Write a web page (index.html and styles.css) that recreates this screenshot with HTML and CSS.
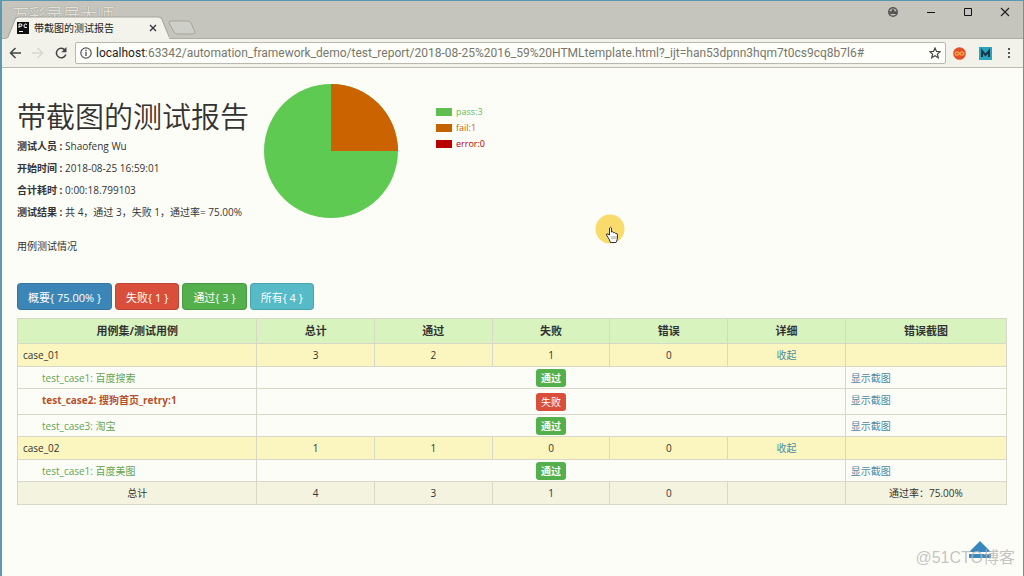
FILE: index.html
```html
<!DOCTYPE html>
<html lang="zh-CN">
<head>
<meta charset="utf-8">
<meta name="viewport" content="width=device-width, initial-scale=1">
<title>带截图的测试报告</title>
<link rel="stylesheet" href="styles.css">
</head>
<body>
<div class="window">
  <header class="tabstrip">
    <span class="recorder-mark">万彩录屏大师</span>
    <div class="tab">
      <svg class="tab-shape" viewBox="0 0 160 23" preserveAspectRatio="none" aria-hidden="true"><path d="M0 23 L3 21 L10 3 Q11 1 14 1 H149 Q152 1 153 3 L161 23" fill="#f3f3ec" stroke="#a5a59c"/></svg>
      <svg class="favicon" viewBox="0 0 12 12" aria-hidden="true"><path d="M0 0H12V12H0Z" fill="#111"/><path d="M2 6V2H4.500Q5.500 3 4.500 4.300H2M10 2.500Q7 1 7 4Q7 6.500 10 5.300M2 9.500H6" fill="none" stroke="#fff"/></svg>
      <span class="tab-title">带截图的测试报告</span>
      <button class="icon-btn tab-close" aria-label="关闭标签页"><svg viewBox="0 0 8 8" width="8" height="8"><path d="M1 1L7 7M7 1L1 7" stroke="#333" stroke-width="1.300"/></svg></button>
    </div>
    <button class="icon-btn new-tab" aria-label="新标签页"><svg viewBox="0 0 28 15" width="28" height="15"><path d="M3 1H20Q22 1 23 3L27 12Q27 14 25 14H9Q7 14 6 12L1 3Q1 1 3 1Z" fill="#cfcfca" stroke="#a5a59c"/></svg></button>
    <div class="window-controls">
      <button class="icon-btn" aria-label="用户"><svg viewBox="0 0 12 12" width="12" height="12"><circle cx="6" cy="6" r="5" fill="#555"/><path d="M2.500 5.200Q3 2.500 6 2.500T9.500 5.200ZM3 8H9Q8 9.500 6 9.500T3 8Z" fill="#c5c5bd"/><circle cx="6" cy="4.500" r="1.500" fill="#555"/></svg></button>
      <button class="icon-btn" aria-label="最小化"><svg viewBox="0 0 10 10" width="10" height="10"><path d="M1 5.500H9" stroke="#111"/></svg></button>
      <button class="icon-btn" aria-label="最大化"><svg viewBox="0 0 10 10" width="10" height="10"><path d="M1.500 1.500H8.500V8.500H1.500Z" fill="none" stroke="#111"/></svg></button>
      <button class="icon-btn" aria-label="关闭"><svg viewBox="0 0 10 10" width="10" height="10"><path d="M1 1L9 9M9 1L1 9" stroke="#222" stroke-width="1.200"/></svg></button>
    </div>
  </header>
  <nav class="toolbar">
    <div class="nav-buttons">
      <button class="icon-btn" aria-label="后退"><svg viewBox="0 0 12 12" width="12" height="12"><path d="M12 6H1.500M6.500 1L1.500 6L6.500 11" fill="none" stroke="#444" stroke-width="1.500"/></svg></button>
      <button class="icon-btn" aria-label="前进"><svg viewBox="0 0 12 12" width="12" height="12"><path d="M0 6H10.500M5.500 1L10.500 6L5.500 11" fill="none" stroke="#d8d8d2" stroke-width="1.500"/></svg></button>
      <button class="icon-btn" aria-label="重新加载"><svg viewBox="0 0 12 12" width="12" height="12"><path d="M10 3A4.800 4.800 0 1 0 10.800 7.500" fill="none" stroke="#444" stroke-width="1.500"/><path d="M11.500 0V5.200H6.300Z" fill="#444"/></svg></button>
    </div>
    <div class="address">
      <svg viewBox="0 0 12 12" width="12" height="12" aria-hidden="true"><circle cx="6" cy="6" r="5.200" fill="none" stroke="#555" stroke-width="1.200"/><path d="M6 5V9M6 2.800V4.200" stroke="#555" stroke-width="1.400"/></svg>
      <span class="url"><span class="host">localhost</span>:63342/automation_framework_demo/test_report/2018-08-25%2016_59%20HTMLtemplate.html?_ijt=han53dpnn3hqm7t0cs9cq8b7l6#</span>
      <button class="icon-btn" aria-label="添加书签"><svg viewBox="0 0 12 12" width="12" height="12"><path d="M6 1L7.500 4.400L11.200 4.700L8.400 7.100L9.300 10.700L6 8.800L2.700 10.700L3.600 7.100L.8 4.700L4.500 4.400Z" fill="none" stroke="#444" stroke-width="1.200"/></svg></button>
    </div>
    <div class="extensions">
      <button class="icon-btn" aria-label="扩展程序"><svg viewBox="0 0 13 13" width="13" height="13"><circle cx="6.500" cy="6.500" r="6.300" fill="#e34d27"/><path d="M6.500 6.500C5 4 2.200 4.500 2.200 6.500S5 9 6.500 6.500S10.800 4.500 10.800 6.500S8 9 6.500 6.500Z" fill="none" stroke="#f5b04a" stroke-width="1.300"/></svg></button>
      <button class="icon-btn" aria-label="扩展程序 M"><svg viewBox="0 0 13 13" width="13" height="13"><path d="M0 0H13V13H0Z" fill="#2ba4bd"/><path d="M3 10V4L6.500 8L10 4V10" fill="none" stroke="#123848" stroke-width="2"/></svg></button>
      <button class="icon-btn" aria-label="菜单"><svg viewBox="0 0 4 12" width="4" height="12"><path d="M1 1H3V3H1ZM1 5H3V7H1ZM1 9H3V11H1Z" fill="#555"/></svg></button>
    </div>
  </nav>
  <main class="page">
    <section class="summary">
      <div class="info">
        <h1>带截图的测试报告</h1>
        <p><strong>测试人员 :</strong> Shaofeng Wu</p>
        <p><strong>开始时间 :</strong> 2018-08-25 16:59:01</p>
        <p><strong>合计耗时 :</strong> 0:00:18.799103</p>
        <p><strong>测试结果 :</strong> 共 4，通过 3，失败 1，通过率= 75.00%</p>
        <p class="description">用例测试情况</p>
      </div>
      <svg class="pie" viewBox="0 0 134 134" role="img" aria-label="通过 3，失败 1"><circle cx="67" cy="67" r="67" fill="#5fca52"/><path d="M67 67V0A67 67 0 0 1 134 67Z" fill="#cb6300"/></svg>
      <ul class="legend">
        <li class="pass"><i></i>pass:3</li>
        <li class="fail"><i></i>fail:1</li>
        <li class="error"><i></i>error:0</li>
      </ul>
    </section>
    <div class="filters">
      <button class="btn primary">概要{ 75.00% }</button>
      <button class="btn danger">失败{ 1 }</button>
      <button class="btn success">通过{ 3 }</button>
      <button class="btn info-btn">所有{ 4 }</button>
    </div>
    <table class="results">
      <colgroup><col class="col-name"><col><col><col><col><col><col class="col-shot"></colgroup>
      <thead><tr><th>用例集/测试用例</th><th>总计</th><th>通过</th><th>失败</th><th>错误</th><th>详细</th><th>错误截图</th></tr></thead>
      <tbody>
        <tr class="suite"><td class="name">case_01</td><td>3</td><td>2</td><td>1</td><td>0</td><td><a href="#">收起</a></td><td></td></tr>
        <tr class="case"><td class="name">test_case1: 百度搜索</td><td colspan="5"><a href="#" class="label success">通过</a></td><td class="shot"><a href="#">显示截图</a></td></tr>
        <tr class="case failed"><td class="name">test_case2: 搜狗首页_retry:1</td><td colspan="5"><button class="label danger">失败</button></td><td class="shot"><a href="#">显示截图</a></td></tr>
        <tr class="case"><td class="name">test_case3: 淘宝</td><td colspan="5"><a href="#" class="label success">通过</a></td><td class="shot"><a href="#">显示截图</a></td></tr>
        <tr class="suite"><td class="name">case_02</td><td>1</td><td>1</td><td>0</td><td>0</td><td><a href="#">收起</a></td><td></td></tr>
        <tr class="case"><td class="name">test_case1: 百度美图</td><td colspan="5"><a href="#" class="label success">通过</a></td><td class="shot"><a href="#">显示截图</a></td></tr>
      </tbody>
      <tfoot><tr><td>总计</td><td>4</td><td>3</td><td>1</td><td>0</td><td></td><td>通过率：75.00%</td></tr></tfoot>
    </table>
  </main>
  <div class="pointer">
    <svg viewBox="0 0 30 30" width="30" height="30" aria-hidden="true"><circle cx="15" cy="15" r="14.500" fill="#f8db6a"/><path d="M14 25L11.500 21Q11 19.500 13 20L14.500 21V14Q15.500 12.500 16.500 14V18Q18 17 18.500 18.700Q20 18 20.500 19.500Q22.500 19 22.500 21V23Q22.500 26 21 28.500H15.500Z" fill="#fff" stroke="#333"/><path d="M17 22V25M19 22V25M21 22V25" stroke="#777" stroke-width=".7"/></svg>
  </div>
  <a class="to-top" href="#" aria-label="返回顶部"><svg viewBox="0 0 24 18" width="24" height="18"><path d="M12 0L23 11H1ZM1 13H23V17H1Z" fill="#3988bd"/></svg></a>
  <span class="watermark">@51CTO博客</span>
</div>
</body>
</html>
```
FILE: styles.css
```css
* { box-sizing: border-box; }
body {
  margin: 0;
  font-family: "Open Sans", "Noto Sans CJK SC", sans-serif;
  font-size: 10px;
  color: #333;
  background: #fdfdf8;
}
a { color: #4c8ba5; text-decoration: none; }
button { font-family: inherit; }
.window {
  position: relative;
  min-height: 100vh;
  border: solid #5d98b2;
  border-width: 1px 1px 0 2px;
}
.icon-btn {
  display: inline-flex;
  padding: 0;
  border: 0;
  background: none;
}
.tabstrip {
  position: relative;
  display: flex;
  align-items: flex-end;
  height: 38px;
  padding-left: 3px;
  background: #c5c5bd;
  border-bottom: 1px solid #adada4;
}
.recorder-mark {
  position: absolute;
  left: 10px;
  top: 4px;
  font-size: 17px;
  line-height: 20px;
  color: #e0e0da;
  text-shadow: 0 0 1px #777;
}
.tab {
  position: relative;
  display: flex;
  align-items: center;
  gap: 5px;
  width: 164px;
  height: 23px;
  padding: 0 12px;
  margin-bottom: -1px;
}
.tab-shape { position: absolute; inset: 0; width: 100%; height: 100%; }
.favicon { position: relative; width: 12px; height: 12px; }
.tab-title { position: relative; flex: 1; font-size: 10px; line-height: 14px; color: #222; }
.tab-close { position: relative; }
.new-tab { margin: 0 0 3px -1px; }
.window-controls {
  display: flex;
  align-items: center;
  gap: 27px;
  align-self: flex-start;
  margin-left: auto;
  padding: 5px 13px 0 0;
}
.toolbar {
  display: flex;
  align-items: center;
  height: 29px;
  background: #f2f2ea;
  border-bottom: 1px solid #bcbcae;
}
.nav-buttons { display: flex; gap: 11px; padding: 0 8px 0 7px; }
.address {
  display: flex;
  flex: 1;
  align-items: center;
  gap: 4px;
  min-width: 0;
  height: 22px;
  padding: 0 4px;
  background: #fefefa;
  border: 1px solid #b8b8ae;
  border-radius: 2px;
}
.url {
  flex: 1;
  min-width: 0;
  overflow: hidden;
  font-family: Roboto, "Noto Sans CJK SC", sans-serif;
  font-size: 12px;
  white-space: nowrap;
  color: #77776c;
}
.host { color: #222; }
.extensions {
  display: flex;
  align-items: center;
  gap: 13px;
  padding: 0 12px 0 7px;
}
.extensions .icon-btn:last-child { margin-left: 2px; }
.page { padding: 16px 16px 24px 15px; }
.summary { display: flex; align-items: flex-start; }
.info { width: 247px; white-space: nowrap; }
h1 {
  margin: 14px 0 0;
  font-size: 29px;
  font-weight: 350;
  line-height: 37px;
}
.info p { margin: 0; line-height: 22px; }
.info .description { margin-top: 12px; }
.pie { width: 134px; height: 134px; flex: none; }
.legend {
  margin: 20px 0 0 38px;
  padding: 0;
  list-style: none;
  font-size: 9px;
  line-height: 16px;
}
.legend li { display: flex; align-items: center; gap: 4px; }
.legend i { width: 16px; height: 8px; background: currentColor; }
.legend .pass { color: #5fbd52; }
.legend .fail { color: #c46200; }
.legend .error { color: #b80000; }
.filters { display: flex; gap: 3px; margin-top: 26px; }
.btn {
  height: 27px;
  padding: 0 10px;
  border: 1px solid #0002;
  border-radius: 4px;
  font-size: 11px;
  color: #fff;
}
.primary { background: #3c86b7; }
.danger { background: #d94f3b; }
.success { background: #54b04d; }
.info-btn { background: #56bbc7; }
.results {
  width: 100%;
  margin-top: 8px;
  table-layout: fixed;
  border-collapse: collapse;
  text-align: center;
}
.col-name { width: 24.2%; }
.col-shot { width: 16.3%; }
.results th, .results td {
  height: 22px;
  padding: 0 5px;
  border: 1px solid #d8d8c8;
  line-height: 16px;
}
.results th { height: 25px; font-size: 11px; background: #d9f3bf; }
.results .suite td { height: 23px; background: #fbf5bf; }
.results tfoot td { height: 23px; background: #f3f3df; }
.results .name, .results .shot { text-align: left; }
.results .case .name { padding-left: 24px; color: #62a450; }
.results .failed td { height: 26px; }
.results .failed .name { font-weight: 700; color: #b6502b; }
.results .failed .name, .results .failed .shot { padding-bottom: 4px; }
.label {
  display: inline-block;
  min-width: 30px;
  height: 18px;
  padding: 0 5px;
  border: 0;
  border-radius: 3px;
  font-size: 10px;
  font-weight: 700;
  line-height: 18px;
  vertical-align: middle;
  color: #fff;
}
.label.danger { font-weight: 400; }
.pointer { position: absolute; left: 593px; top: 213px; }
.pointer svg { display: block; }
.to-top { position: absolute; right: 31px; bottom: 17px; }
.to-top svg { display: block; }
.watermark {
  position: absolute;
  right: 8px;
  bottom: 7px;
  font-family: "Liberation Sans", "Noto Sans CJK SC", sans-serif;
  font-size: 16px;
  line-height: 22px;
  color: #b5b5b5cc;
}
```
